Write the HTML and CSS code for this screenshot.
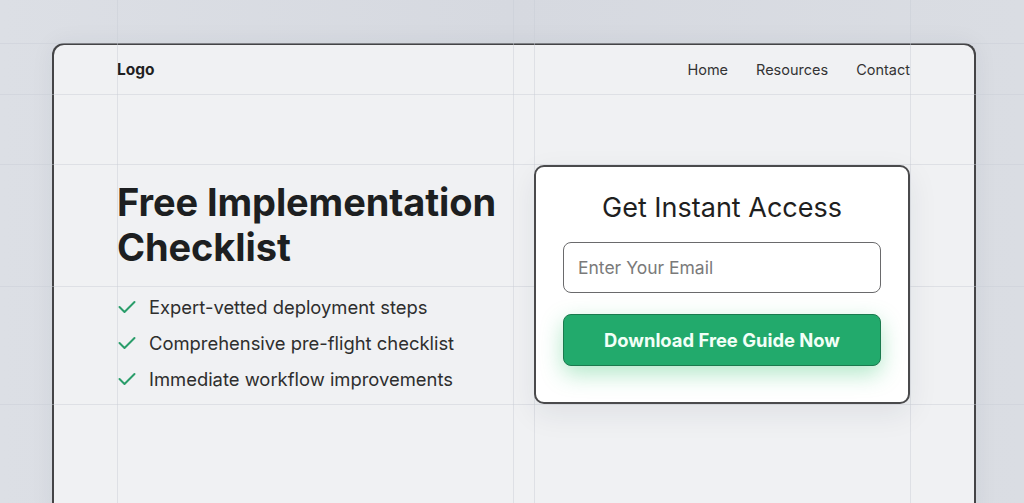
FILE: index.html
```html
<!DOCTYPE html>
<html lang="en">
<head>
<meta charset="utf-8">
<title>Free Implementation Checklist</title>
<link rel="stylesheet" href="styles.css">
</head>
<body>
<div class="frame">
  <header class="topbar">
    <div class="logo">Logo</div>
    <nav class="nav">
      <a href="#">Home</a>
      <a href="#">Resources</a>
      <a href="#">Contact</a>
    </nav>
  </header>
  <section class="hero">
    <div class="intro">
      <h1 class="headline">Free Implementation<br>Checklist</h1>
      <ul class="benefits">
        <li><svg class="check" viewBox="0 0 18 14" width="18" height="14"><polyline points="1.5,7 6.5,12 16.5,2" fill="none" stroke="#2a9d6a" stroke-width="2" stroke-linecap="round" stroke-linejoin="round"/></svg>Expert-vetted deployment steps</li>
        <li><svg class="check" viewBox="0 0 18 14" width="18" height="14"><polyline points="1.5,7 6.5,12 16.5,2" fill="none" stroke="#2a9d6a" stroke-width="2" stroke-linecap="round" stroke-linejoin="round"/></svg>Comprehensive pre-flight checklist</li>
        <li><svg class="check" viewBox="0 0 18 14" width="18" height="14"><polyline points="1.5,7 6.5,12 16.5,2" fill="none" stroke="#2a9d6a" stroke-width="2" stroke-linecap="round" stroke-linejoin="round"/></svg>Immediate workflow improvements</li>
      </ul>
    </div>
    <form class="card">
      <h2 class="card-title">Get Instant Access</h2>
      <input class="email" type="email" placeholder="Enter Your Email">
      <button class="cta" type="button">Download Free Guide Now</button>
    </form>
  </section>
</div>
<div class="guides" aria-hidden="true">
  <span class="v v1"></span><span class="v v2"></span><span class="v v3"></span><span class="v v4"></span>
  <span class="h h1"></span><span class="h h2"></span><span class="h h3"></span><span class="h h4"></span><span class="h h5"></span>
</div>
</body>
</html>
```

FILE: styles.css
```css
* { box-sizing: border-box; }

html, body {
  margin: 0;
  height: 100%;
  overflow: hidden;
}

body {
  background: linear-gradient(90deg, #dcdfe5 0%, #d6d9e0 50%, #dadde3 100%);
  font-family: Inter, "Noto Sans", "Liberation Sans", sans-serif;
  color: #222;
  position: relative;
}

.frame {
  margin: 43px 48px 0 52px;
  height: 480px;
  background: #f0f1f3;
  border: 2px solid #444446;
  border-bottom: none;
  border-radius: 12px 12px 0 0;
  box-shadow: 0 0 24px rgba(40, 50, 70, 0.06);
}

.topbar {
  height: 49px;
  display: flex;
  align-items: center;
  justify-content: space-between;
  padding: 0 64px 0 63px;
}

.logo {
  font-weight: 700;
  font-size: 15.5px;
  color: #1f1f1f;
}

.nav {
  display: flex;
  gap: 28px;
}

.nav a {
  font-size: 14.5px;
  color: #333;
  text-decoration: none;
}

.hero {
  display: flex;
  align-items: flex-start;
  justify-content: space-between;
  padding: 71px 64px 0 63px;
}

.intro {
  padding-top: 15px;
}

.headline {
  margin: 0;
  font-size: 38px;
  line-height: 45px;
  font-weight: 700;
  letter-spacing: -0.1px;
  color: #1d1f21;
}

.benefits {
  list-style: none;
  margin: 19px 0 0;
  padding: 0;
}

.benefits li {
  display: flex;
  align-items: center;
  height: 36px;
  font-size: 18.4px;
  color: #2e2e2e;
}

.check {
  margin: 0 13px 0 1px;
  flex: none;
}

.card {
  position: relative;
  z-index: 1;
  width: 376px;
  margin: 0;
  background: #fff;
  border: 2px solid #4a4a4c;
  border-radius: 10px;
  padding: 25px 27px 36px;
  display: flex;
  flex-direction: column;
  box-shadow: 0 10px 30px rgba(30, 40, 60, 0.08);
}

.card-title {
  margin: 0 0 18px;
  text-align: center;
  font-size: 27px;
  line-height: 32px;
  font-weight: 400;
  color: #1f1f1f;
}

.email {
  height: 51px;
  border: 1.5px solid #6a6a6c;
  border-radius: 8px;
  padding: 0 14px;
  font-family: inherit;
  font-size: 17.5px;
  color: #333;
  background: #fff;
  outline: none;
}

.email::placeholder {
  color: #7a7a7a;
}

.cta {
  margin-top: 21px;
  height: 52px;
  border: 1px solid #1b7a4e;
  border-radius: 8px;
  background: #22aa6c;
  color: #f2fff7;
  font-family: inherit;
  font-size: 18.4px;
  font-weight: 700;
  box-shadow: 0 8px 22px rgba(34, 190, 100, 0.35);
}

.guides {
  position: absolute;
  inset: 0;
  pointer-events: none;
}

.guides span {
  position: absolute;
  background: rgba(200, 204, 212, 0.45);
}

.v { top: 0; bottom: 0; width: 1px; }
.h { left: 0; right: 0; height: 1px; }

.v1 { left: 117px; }
.v2 { left: 513px; }
.v3 { left: 534px; }
.v4 { left: 910px; }

.h1 { top: 43px; }
.h2 { top: 94px; }
.h3 { top: 164px; }
.h4 { top: 286px; }
.h5 { top: 404px; }
```
